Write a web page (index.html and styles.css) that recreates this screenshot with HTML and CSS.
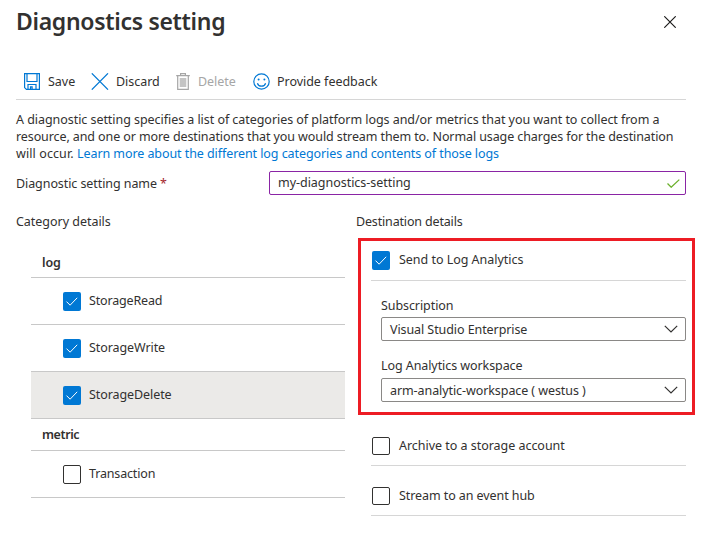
FILE: index.html
```html
<!DOCTYPE html>
<html lang="en">
<head>
<meta charset="utf-8">
<title>Diagnostics setting</title>
<link rel="stylesheet" href="styles.css">
</head>
<body>
<svg class="defs" width="0" height="0" aria-hidden="true">
  <symbol id="check" viewBox="0 0 18 19"><path d="M3.5 9.6l3.6 3.6L14.2 5.8" fill="none" stroke="currentColor" stroke-width="1"/></symbol>
  <symbol id="chevron" viewBox="0 0 14 8"><path d="M.8.8L7 7 13.2.8" fill="none" stroke="currentColor" stroke-width="1.2"/></symbol>
</svg>
<main class="blade">
  <header class="blade-header">
    <h1 class="title">Diagnostics setting</h1>
    <svg class="close" viewBox="0 0 12 12"><path d="M.3.3l11.4 11.4M11.7.3L.3 11.7" stroke="currentColor" stroke-width="1.15"/></svg>
  </header>

  <nav class="toolbar">
    <span class="command save">
      <svg width="16" height="17" viewBox="0 0 16 17" fill="none" stroke="#0078d4" stroke-width="1.2"><path d="M.6.6h14.8v15.8H2.4L.6 14.6z"/><path d="M3 .6v7.9h10V.6M4 16.4v-4.9h8v4.9M6.5 16.4v-2.6h1.6v2.6"/></svg>
      <span>Save</span>
    </span>
    <span class="command discard">
      <svg width="18" height="17" viewBox="0 0 18 17" fill="none" stroke="#0078d4" stroke-width="1.3"><path d="M.8.4l16.2 16.2M17 .4L.8 16.6"/></svg>
      <span>Discard</span>
    </span>
    <span class="command delete">
      <svg width="14" height="17" viewBox="0 0 14 17" fill="none" stroke="#a6a6a6" stroke-width="1.2"><path d="M.2 2.6h13.6M4.6 2.4V.6h4.8v1.8M1.7 2.8v13.5h10.6V2.8"/><path d="M3.7 5h6.6v9H3.7z" fill="#c4c4c4" stroke="none"/></svg>
      <span>Delete</span>
    </span>
    <span class="command feedback">
      <svg width="17" height="17" viewBox="0 0 17 17" fill="none" stroke="#0078d4" stroke-width="1.2"><circle cx="8.5" cy="8.5" r="7.7"/><path d="M4.4 10.2c1.2 3.9 7 3.9 8.2 0"/><circle cx="5.6" cy="6.5" r="1" fill="#0078d4" stroke="none"/><circle cx="11.4" cy="6.5" r="1" fill="#0078d4" stroke="none"/></svg>
      <span>Provide feedback</span>
    </span>
  </nav>

  <p class="intro"><span class="line-a">A diagnostic setting specifies a list of categories of platform logs and/or metrics that you want to collect from a</span><br><span class="line-b">resource, and one or more destinations that you would stream them to. Normal usage charges for the destination</span><br><span class="line-c">will occur. </span><a class="link">Learn more about the different log categories and contents of those logs</a></p>

  <div class="name-row">
    <label class="name-label snug">Diagnostic setting name <span class="required">*</span></label>
    <div class="field name-field">
      <span>my-diagnostics-setting</span>
      <svg width="13" height="9" viewBox="0 0 13 9"><path d="M.5 4.5l3.7 3.7L12.3.6" fill="none" stroke="#6bb02c" stroke-width="1.3"/></svg>
    </div>
  </div>

  <div class="columns">
    <section class="categories">
      <h2 class="heading">Category details</h2>
      <div class="group log">log</div>
      <div class="item"><svg class="box on"><use href="#check"/></svg><span class="tight">StorageRead</span></div>
      <div class="item"><svg class="box on"><use href="#check"/></svg><span class="snug">StorageWrite</span></div>
      <div class="item hover"><svg class="box on"><use href="#check"/></svg><span class="snug">StorageDelete</span></div>
      <div class="group metric">metric</div>
      <div class="item"><span class="box"></span><span class="tight">Transaction</span></div>
    </section>
    <section class="destinations">
      <h2 class="heading tight">Destination details</h2>
      <div class="highlight">
        <div class="target first"><svg class="box on"><use href="#check"/></svg><span>Send to Log Analytics</span></div>
        <div class="form">
          <label class="snug">Subscription</label>
          <div class="field select"><span class="snug">Visual Studio Enterprise</span><svg class="chev"><use href="#chevron"/></svg></div>
          <label class="ws-label snug">Log Analytics workspace</label>
          <div class="field select"><span class="snug">arm-analytic-workspace ( westus )</span><svg class="chev"><use href="#chevron"/></svg></div>
        </div>
      </div>
      <div class="target archive"><span class="box"></span><span>Archive to a storage account</span></div>
      <div class="target stream"><span class="box"></span><span class="snug">Stream to an event hub</span></div>
    </section>
  </div>
</main>
</body>
</html>
```
FILE: styles.css
```css
* { box-sizing: border-box; }
body {
  margin: 0;
  background: #fff;
  color: #323130;
  font: 12.5px/18px "Noto Sans", "Open Sans", sans-serif;
  letter-spacing: -.03px;
}
svg { display: block; flex: none; }
.snug { letter-spacing: -.08px; }
.tight { letter-spacing: -.16px; }
.defs { position: absolute; }
.blade { width: 703px; height: 543px; padding: 0 17px 0 16px; overflow: hidden; white-space: nowrap; }
.blade-header { display: flex; align-items: center; justify-content: space-between; height: 43px; padding-right: 10px; }
.title { margin: 0; padding-bottom: 1px; font-size: 23px; line-height: 31px; font-weight: 600; letter-spacing: -.31px; }
.close { width: 12px; height: 12px; color: #1b1a19; }

.toolbar { display: flex; margin-top: 20px; height: 37px; padding-left: 8px; border-bottom: 1px solid #d6d6d6; }
.command { display: flex; align-items: center; gap: 8px; }
.command > span { padding-top: 2px; }
.save { width: 67px; }
.discard { width: 85px; gap: 7px; }
.delete { width: 77px; color: #a6a6a6; gap: 8px; }
.feedback { gap: 7px; }

.intro { margin: 11px 0 0; line-height: 17px; }
.line-a { letter-spacing: -.05px; }
.line-b { letter-spacing: -.1px; }
.line-c { letter-spacing: .1px; }
.link { color: #0078d4; letter-spacing: -.075px; }

.name-row { display: flex; align-items: center; margin-top: 9px; height: 24px; }
.name-label { width: 253px; padding-top: 2px; }
.required { color: #a4262c; }
.field { display: flex; align-items: center; justify-content: space-between; height: 24px; padding: 0 7px 0 8px; border: 1px solid #8a8886; border-radius: 2px; }
.name-field { flex: 1; border-color: #8a24a5; padding-right: 5px; }

.columns { display: flex; margin-top: 16px; }
.heading { margin: 0; height: 20px; padding-top: 1px; font-size: inherit; font-weight: 400; line-height: 20px; }
.categories { flex: none; width: 340px; padding-right: 11px; }
.group, .item { display: flex; align-items: center; margin-left: 15px; border-bottom: 1px solid #c8c8c8; }
.group { padding-left: 11px; font-weight: 600; letter-spacing: -.4px; }
.log { margin-top: 17px; height: 30px; letter-spacing: -.1px; }
.metric { height: 32px; padding-top: 1px; }
.item { height: 47px; padding-left: 32px; gap: 8px; }
.hover { background: #ebeae8; }
.box { flex: none; width: 18px; height: 19px; border: 1px solid #323130; border-radius: 2px; }
.box.on { border: 0; background: #0078d4; color: #fff; }

.destinations { width: 339px; flex: none; }
.highlight { width: 337px; height: 177px; margin: 7px 0 0 2px; padding: 0 6px 0 10px; border: 3px solid #ed1c24; }
.target { display: flex; gap: 9px; padding-left: 1px; border-bottom: 1px solid #d6d6d6; }
.first { height: 40px; padding-top: 10px; }
.archive, .stream { width: 315px; margin-left: 15px; }
.archive { height: 51px; padding-top: 22px; }
.stream { height: 50px; padding-top: 21px; }
.archive .box, .stream .box { height: 18px; }
.form { display: flex; flex-direction: column; padding: 15px 0 0 10px; }
.form label { height: 18px; padding-top: 1px; }
.form .select { margin-top: 3px; }
.select > span { padding-top: 1px; }
.form .ws-label { margin-top: 15px; }
.form .ws-label + .select { margin-top: 4px; }
.chev { width: 14px; height: 8px; }
```
